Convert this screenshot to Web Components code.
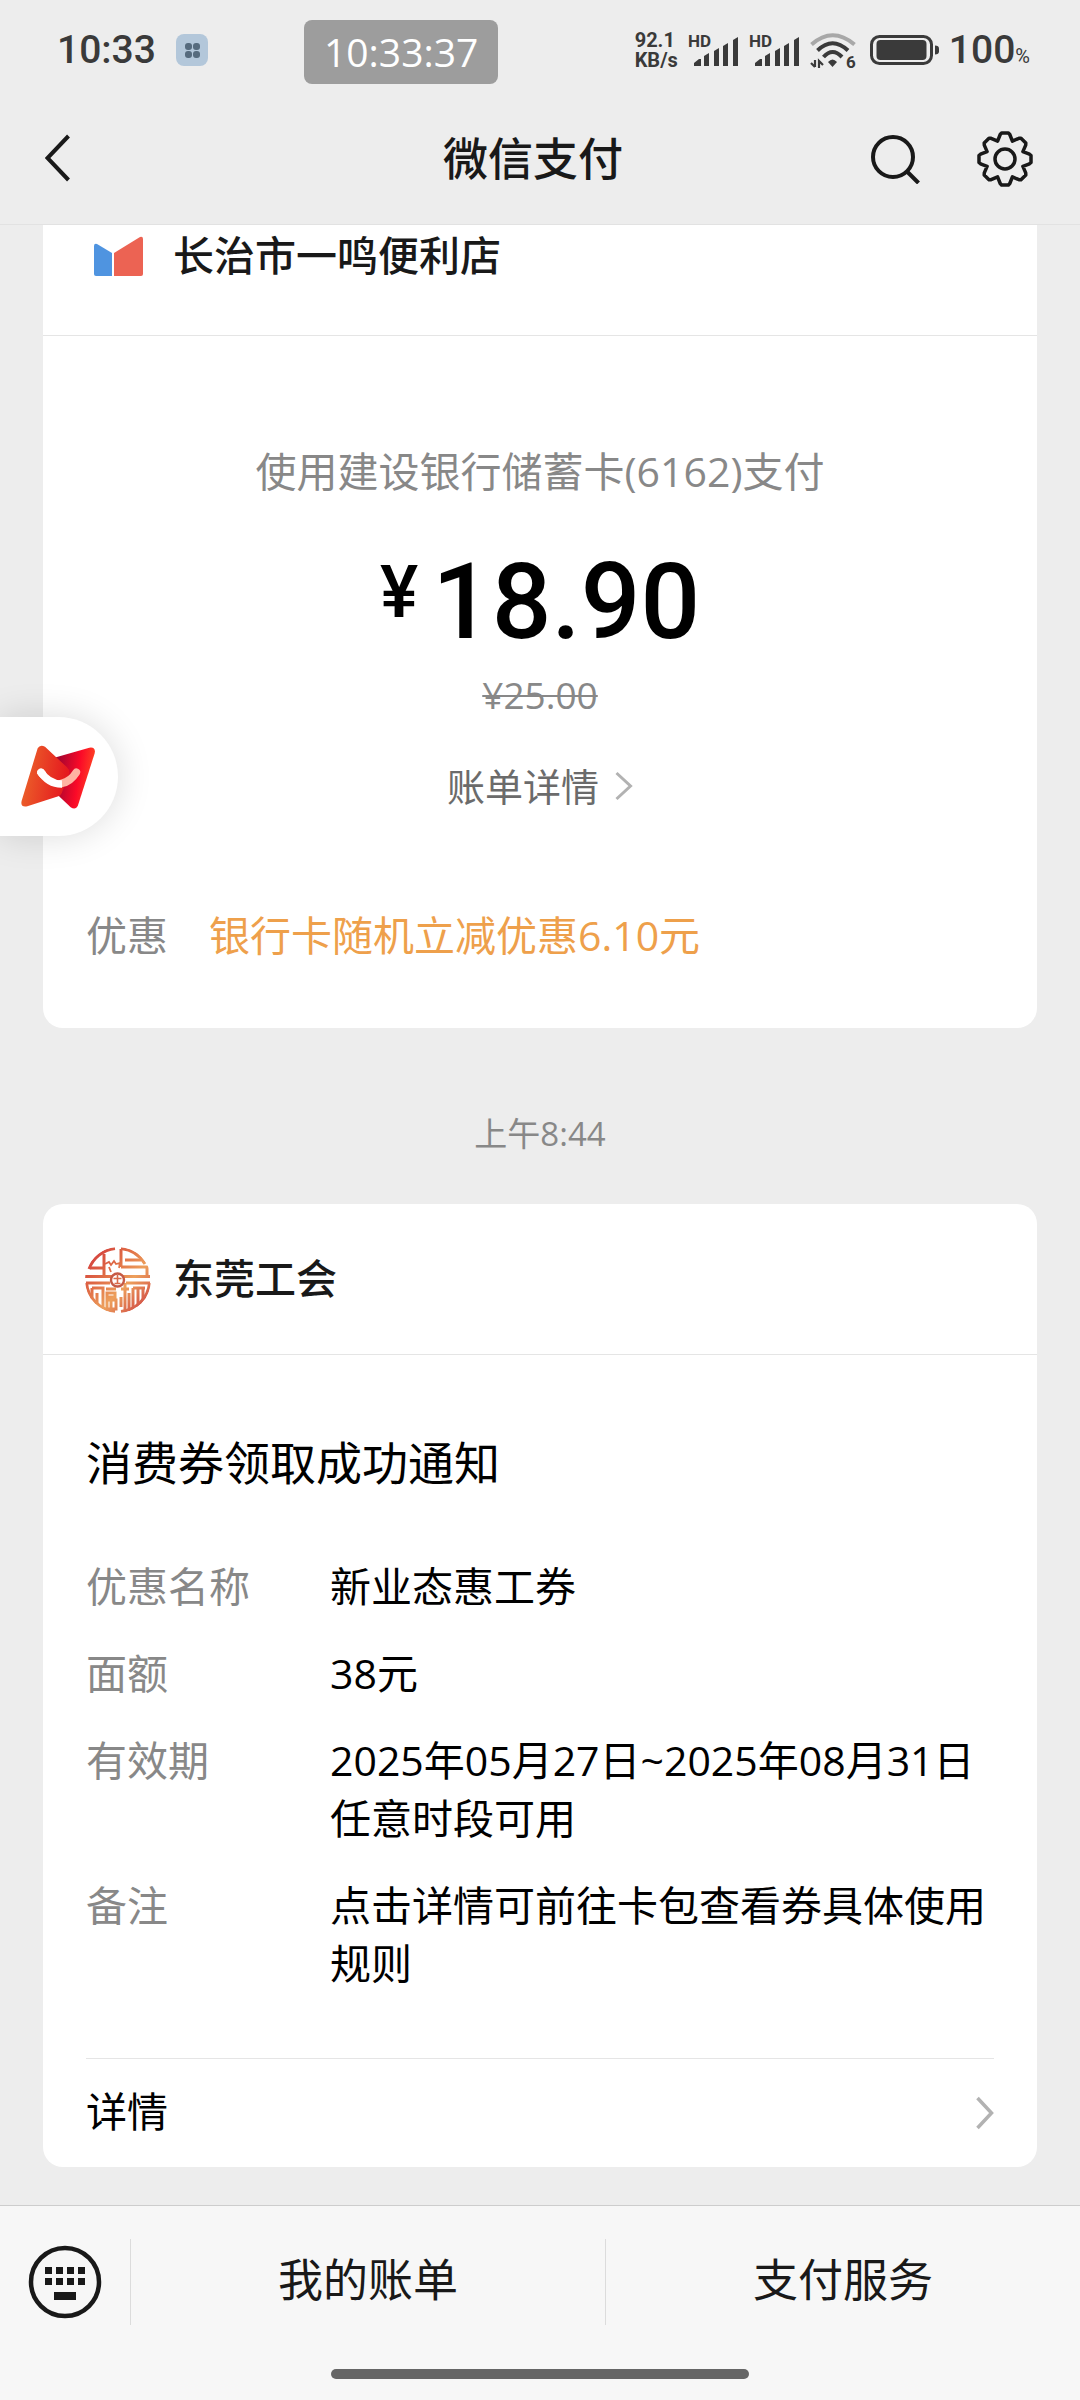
<!DOCTYPE html>
<html lang="zh-CN">
<head>
<meta charset="utf-8">
<meta name="viewport" content="width=device-width, initial-scale=1">
<title>微信支付</title>
<style>
    html, body {
        margin: 0;
        height: 100%;
    }
    body {
        --ink: #191919;
        --muted: #888;
        --line: #e5e5e5;
        --page: #ededed;
        font-family: "Open Sans", "Noto Sans CJK SC", sans-serif;
        color: #000;
        background: var(--page);
    }
</style>
</head>
<body>
<chat-page>
    <status-bar slot="top" time="10:33" clock="10:33:37" battery="100"></status-bar>
    <nav-bar slot="top">微信支付</nav-bar>

    <message-card class="pay">
        <ui-icon slot="logo" name="shop"></ui-icon>
        <span slot="name">长治市一鸣便利店</span>
        <pay-summary amount="18.90" original="¥25.00">
            <span slot="method">使用建设银行储蓄卡(6162)支付</span>
            <span slot="link">账单详情</span>
            <span slot="label">优惠</span>
            <span slot="discount">银行卡随机立减优惠6.10元</span>
        </pay-summary>
    </message-card>

    <time-stamp>上午8:44</time-stamp>

    <message-card>
        <ui-icon slot="logo" name="union"></ui-icon>
        <span slot="name">东莞工会</span>
        <coupon-notice id="notice">消费券领取成功通知</coupon-notice>
    </message-card>

    <menu-bar slot="bottom" items="我的账单,支付服务"></menu-bar>
    <float-button slot="overlay"></float-button>
</chat-page>

<script>
// eight teeth, each one the same outline turned by 45 degrees
const gearPath = () => {
    const tooth = [[-7.4, -17.9], [-4.8, -24.5], [-3.4, -26], [3.4, -26], [4.8, -24.5]];
    const pts = [];
    for (let i = 0; i < 8; i++) {
        const a = i * Math.PI / 4;
        tooth.forEach(([x, y]) => {
            const px = x * Math.cos(a) - y * Math.sin(a) + 28;
            const py = x * Math.sin(a) + y * Math.cos(a) + 28;
            pts.push(`${px.toFixed(1)} ${py.toFixed(1)}`);
        });
    }
    return `M${pts.join('L')}Z`;
};

const ICONS = {
    app: { w: 32, h: 32, body: `
        <rect width="32" height="32" rx="8" fill="#b3c7da"/>
        <g fill="#566b7e"><rect x="9" y="9" width="7" height="7" rx="3"/><rect x="17" y="9" width="7" height="7" rx="3"/>
        <rect x="9" y="17" width="7" height="7" rx="3"/><rect x="17" y="17" width="7" height="7" rx="3"/></g>` },
    signal: { w: 51, h: 48, box: '0 -8 51 48', body: `
        <text x="0" y="13" font-family="Roboto, sans-serif" font-size="17" font-weight="700" fill="#3a3a3a">HD</text>
        <g fill="#3a3a3a"><path d="M6 32v-3l5-4h2v7z"/><path d="M16 32V22l5-3v13z"/><path d="M26 32V17l5-3v18z"/>
        <path d="M35 32V12l5-3v23z"/><path d="M45 32V6l5-3v29z"/></g>` },
    wifi: { w: 50, h: 48, box: '0 -6 50 48', body: `
        <g fill="none" stroke-width="4"><path stroke="#a8a8a8" d="M1.5 12.5Q22.5-6 44.5 12.5"/>
        <path stroke="#3a3a3a" d="M7.5 18.5Q22.5 4 38 18.5"/><path stroke="#3a3a3a" d="M13.5 25Q22.5 15 32 25"/></g>
        <path fill="#3a3a3a" d="M18 30q4.5-5 9 0l-4.500 5z"/>
        <path fill="none" stroke="#3a3a3a" stroke-width="2.2" d="M5 28v7M1 31l4 4M9 36v-7l4 4"/>
        <text x="36" y="36" font-family="Roboto, sans-serif" font-size="17" font-weight="700" fill="#3a3a3a">6</text>` },
    battery: { w: 69, h: 30, body: `
        <rect x="1.5" y="1.5" width="60" height="27" rx="8" fill="none" stroke="#3a3a3a" stroke-width="3"/>
        <rect x="6.5" y="5" width="50" height="20" rx="4" fill="#3a3a3a"/>
        <path fill="#3a3a3a" d="M65 10.5q4 0 4 3v3q0 3-4 3z"/>` },
    back: { w: 26, h: 50, body: `<path d="M23.5 4L2.5 26l21 22" fill="none" stroke="#191919" stroke-width="4"/>` },
    search: { w: 50, h: 50, body: `
        <g fill="none" stroke="#191919" stroke-width="4"><circle cx="22" cy="23" r="20"/><path d="M36.5 38l11 11"/></g>` },
    gear: { w: 56, h: 56, body: `
        <g fill="none" stroke="#191919" stroke-width="3.5" stroke-linejoin="round"><path d="${gearPath()}"/><circle cx="28" cy="28" r="10"/></g>` },
    next: { w: 18, h: 34, body: `<path d="M1.5 2L15.5 17l-14 15" fill="none" stroke="#b2b2b2" stroke-width="3.5"/>` },
    nextSmall: { w: 18, h: 30, body: `<path d="M1.5 2L15.5 15l-14 13" fill="none" stroke="#b2b2b2" stroke-width="3"/>` },
    keyboard: { w: 74, h: 74, body: `
        <circle cx="37" cy="37" r="34" fill="none" stroke="#191919" stroke-width="4.5"/>
        <path fill="#191919" d="M17 22h7v7h-7zM28 22h7v7h-7zM39 22h7v7h-7zM50 22h7v7h-7zM17 33h7v7h-7zM28 33h7v7h-7zM39 33h7v7h-7zM50 33h7v7h-7zM26 47h22v8h-22z"/>` },
    shop: { w: 66, h: 66, body: `
        <path fill="#4f94e0" d="M9 22q0-3 3-2l15 9v23h-16q-2 0-2-2z"/>
        <path fill="#ec6353" d="M29 29L55 13q3-1 3 2v35q0 2-2 2H29z"/>` },
    union: { w: 66, h: 66, body: `
        <defs><linearGradient id="u" x1="0" y1="0" x2="66" y2="66" gradientUnits="userSpaceOnUse"><stop offset="0" stop-color="#cf2f3c"/><stop offset=".35" stop-color="#df6a45"/>
        <stop offset=".6" stop-color="#eda05c"/><stop offset="1" stop-color="#c93440"/></linearGradient>
        <clipPath id="c"><circle cx="33" cy="33" r="33"/></clipPath></defs>
        <g fill="none" stroke="url(#u)" stroke-width="3" clip-path="url(#c)">
            <path d="M4 22A31.5 31.5 0 0 1 30 1.5M36 1.5A31.5 31.5 0 0 1 60 17M1.5 36A31.5 31.5 0 0 0 30 64.5M36 64.5A31.5 31.5 0 0 0 64.5 36"/>
            <path d="M5 21H20M19 7V28M0 29.5H27M36 2V20M40 13H56M36 20H62V28M38 29.5H65"/>
            <path d="M1 36H25M7 41H18V46M7 41V52M12 46V57M18 46V62M21 42H31M22 46H30V50H22ZM22 53H31V62H22ZM26 53V63"/>
            <path d="M41 36H65M36 42H44M40 36V64M36 50V60M44 46V64M48 41V64M48 41H60M53 41V60M58 41V54M53 60L62 50"/>
            <path stroke-width="1.8" d="M20 17l4-2 2 3 3-4 2 3 4-1-1 5M24 20l2 5"/>
        </g>
        <circle cx="32.5" cy="33" r="6.5" fill="#fff" stroke="#c65a45" stroke-width="2.4"/>
        <path d="M28.5 31.5h8M32.5 28v9M29.5 36.5h6" stroke="#d96b4a" stroke-width="1.6"/>` },
    smile: { w: 76, h: 66, box: '62 160 228 198', body: `
        <defs><linearGradient id="l" x1="0" y1="0" x2="1" y2=".2"><stop offset="0" stop-color="#ec6a2b"/><stop offset="1" stop-color="#e5191f"/></linearGradient>
        <linearGradient id="r" x1="0" y1=".3" x2="1" y2=".5"><stop offset=".1" stop-color="#a8052f"/><stop offset=".6" stop-color="#fb0a28"/><stop offset="1" stop-color="#ff4a22"/></linearGradient></defs>
        <path fill="url(#r)" d="M165 201L270 171Q290 168 286 188L236 344Q229 360 214 350L176 314Z"/>
        <path fill="url(#l)" d="M115 173Q122 160 137 168L203 230Q213 240 209 250L187 308Q184 315 177 317L84 347Q62 351 67 330Z"/>
        <g fill="none" stroke-width="23" stroke-linecap="round"><path stroke="#ffb3a3" d="M188 278Q214 272 231 245"/>
        <path stroke="#fff" stroke-linecap="butt" d="M122 241Q148 281 188 280"/><path stroke="#fff" d="M125 245l4 5"/></g>` }
};

class UiIcon extends HTMLElement {
    connectedCallback() {
        if (this.shadowRoot) return;
        const icon = ICONS[this.getAttribute('name')];
        this.attachShadow({ mode: 'open' });
        this.shadowRoot.innerHTML = `
            <style>
                :host { display: block; flex: none; }
                svg { display: block; }
            </style>
            <svg width="${icon.w}" height="${icon.h}" viewBox="${icon.box || `0 0 ${icon.w} ${icon.h}`}" aria-hidden="true">${icon.body}</svg>
        `;
    }
}

class ChatPage extends HTMLElement {
    connectedCallback() {
        this.attachShadow({ mode: 'open' });
        // the list sticks to its end, so older messages run up under the nav bar
        this.shadowRoot.innerHTML = `
            <style>
                :host {
                    display: flex;
                    flex-direction: column;
                    height: 100vh;
                    position: relative;
                }
                main {
                    flex: 1;
                    min-height: 0;
                    overflow: hidden;
                    display: flex;
                    flex-direction: column;
                    justify-content: flex-end;
                    padding: 0 43px 38px;
                }
            </style>
            <slot name="top"></slot>
            <main><slot></slot></main>
            <slot name="bottom"></slot>
            <slot name="overlay"></slot>
        `;
    }
}

class StatusBar extends HTMLElement {
    connectedCallback() {
        this.attachShadow({ mode: 'open' });
        this.shadowRoot.innerHTML = `
            <style>
                :host {
                    display: flex;
                    align-items: center;
                    height: 100px;
                    padding: 0 50px 0 57px;
                    color: #3a3a3a;
                    position: relative;
                    z-index: 1;
                    flex: none;
                }
                .time, .level {
                    font-family: Roboto, sans-serif;
                    font-size: 39px;
                    line-height: 52px;
                    font-weight: 500;
                }
                .app { margin-left: 20px; }
                .clock {
                    position: absolute;
                    left: 304px;
                    top: 20px;
                    padding: 0 20px;
                    border-radius: 8px;
                    background: #9d9d9d;
                    color: #fff;
                    font-size: 39px;
                    line-height: 64px;
                }
                .right { margin-left: auto; display: flex; align-items: center; gap: 10px; }
                .speed { font-family: Roboto, sans-serif; font-size: 20px; line-height: 20px; font-weight: 700; }
                .speed span { display: block; }
                .level { display: flex; align-items: baseline; }
                .level small { font-size: 20px; line-height: 24px; font-weight: 400; }
            </style>
            <span class="time">${this.getAttribute('time')}</span>
            <ui-icon class="app" name="app"></ui-icon>
            <span class="clock">${this.getAttribute('clock')}</span>
            <div class="right">
                <div class="speed"><span>92.1</span><span>KB/s</span></div>
                <ui-icon name="signal"></ui-icon>
                <ui-icon name="signal"></ui-icon>
                <ui-icon name="wifi"></ui-icon>
                <ui-icon name="battery"></ui-icon>
                <span class="level">${this.getAttribute('battery')}<small>%</small></span>
            </div>
        `;
    }
}

class NavBar extends HTMLElement {
    connectedCallback() {
        this.attachShadow({ mode: 'open' });
        this.shadowRoot.innerHTML = `
            <style>
                :host {
                    display: grid;
                    grid-template-columns: 1fr auto 1fr;
                    align-items: center;
                    flex: none;
                    height: 118px;
                    padding: 0 47px 6px 45px;
                    border-bottom: 1px solid #e2e2e2;
                    color: var(--ink);
                }
                h1 { margin: 0; padding-right: 12px; font-size: 45px; line-height: 60px; font-weight: 500; }
                button { border: 0; padding: 0; background: none; }
                .tools { display: flex; justify-content: flex-end; gap: 56px; }
                .tools button { display: flex; align-items: center; }
            </style>
            <div><button aria-label="返回"><ui-icon name="back"></ui-icon></button></div>
            <h1><slot></slot></h1>
            <div class="tools">
                <button aria-label="搜索"><ui-icon name="search"></ui-icon></button>
                <button aria-label="设置"><ui-icon name="gear"></ui-icon></button>
            </div>
        `;
    }
}

class MessageCard extends HTMLElement {
    connectedCallback() {
        this.attachShadow({ mode: 'open' });
        this.shadowRoot.innerHTML = `
            <style>
                :host {
                    display: block;
                    flex: none;
                    background: #fff;
                    border-radius: 20px;
                }
                header {
                    display: flex;
                    align-items: center;
                    gap: 22px;
                    padding: 43px 42px 41px;
                    border-bottom: 1px solid var(--line);
                    color: var(--ink);
                    font-size: 41px;
                    line-height: 58px;
                    font-weight: 500;
                }
                header ::slotted(span) { padding-bottom: 4px; }
                :host(.pay) header { padding-bottom: 45px; }
            </style>
            <header><slot name="logo"></slot><slot name="name"></slot></header>
            <slot></slot>
        `;
    }
}

class PaySummary extends HTMLElement {
    connectedCallback() {
        this.attachShadow({ mode: 'open' });
        this.shadowRoot.innerHTML = `
            <style>
                :host {
                    display: flex;
                    flex-direction: column;
                    align-items: center;
                    padding: 106px 43px 64px;
                    font-size: 41px;
                    line-height: 58px;
                    color: var(--muted);
                }
                .amount {
                    display: flex;
                    align-items: flex-start;
                    gap: 14px;
                    margin-top: 43px;
                    color: #000;
                    font-family: Roboto, sans-serif;
                    font-size: 105px;
                    line-height: 120px;
                    font-weight: 500;
                }
                .amount span { font-size: 72px; line-height: 100px; }
                s { margin-top: 6px; font-size: 37px; line-height: 52px; text-decoration-thickness: 2px; }
                a {
                    display: flex;
                    align-items: center;
                    gap: 16px;
                    margin-top: 36px;
                    color: #6b6b6b;
                    font-size: 38px;
                    text-decoration: none;
                }
                .promo { align-self: stretch; display: flex; gap: 41px; margin-top: 91px; }
                .promo slot:last-child { color: #eea04b; }
            </style>
            <slot name="method"></slot>
            <div class="amount"><span>¥</span>${this.getAttribute('amount')}</div>
            <s>${this.getAttribute('original')}</s>
            <a href="#bill"><slot name="link"></slot><ui-icon name="nextSmall"></ui-icon></a>
            <div class="promo"><slot name="label"></slot><slot name="discount"></slot></div>
        `;
    }
}

class TimeStamp extends HTMLElement {
    connectedCallback() {
        this.attachShadow({ mode: 'open' });
        this.shadowRoot.innerHTML = `
            <style>
                :host {
                    display: block;
                    flex: none;
                    padding: 82px 0 46px;
                    text-align: center;
                    color: var(--muted);
                    font-size: 33px;
                    line-height: 48px;
                }
            </style>
            <slot></slot>
        `;
    }
}

class CouponNotice extends HTMLElement {
    constructor() {
        super();
        this.rows = [
            ['优惠名称', '新业态惠工券'],
            ['面额', '38元'],
            ['有效期', '2025年05月27日~2025年08月31日任意时段可用'],
            ['备注', '点击详情可前往卡包查看券具体使用规则']
        ];
    }

    connectedCallback() {
        this.attachShadow({ mode: 'open' });
        this.shadowRoot.innerHTML = `
            <style>
                :host { display: block; padding: 75px 43px 0; font-size: 41px; line-height: 58px; }
                h2 { margin: 0 0 63px; font-size: 46px; line-height: 64px; font-weight: 400; }
                dl { display: grid; grid-template-columns: 208px 1fr; gap: 29px 36px; margin: 0 0 66px; }
                dt { color: var(--muted); }
                dd { margin: 0; }
                a {
                    display: flex;
                    align-items: center;
                    justify-content: space-between;
                    height: 108px;
                    border-top: 1px solid var(--line);
                    color: inherit;
                    text-decoration: none;
                }
                a span { padding-bottom: 4px; }
            </style>
            <h2><slot></slot></h2>
            <dl>${this.rows.map(([k, v]) => `<dt>${k}</dt><dd>${v}</dd>`).join('')}</dl>
            <a href="#detail"><span>详情</span><ui-icon name="next"></ui-icon></a>
        `;
    }
}

class MenuBar extends HTMLElement {
    connectedCallback() {
        const items = this.getAttribute('items').split(',');
        this.attachShadow({ mode: 'open' });
        this.shadowRoot.innerHTML = `
            <style>
                :host {
                    display: block;
                    flex: none;
                    background: #f7f7f7;
                    border-top: 1px solid #cdcdcd;
                }
                nav { display: flex; padding: 33px 0; }
                button {
                    flex: 1;
                    height: 86px;
                    padding: 0 0 4px;
                    border: 0;
                    border-left: 1px solid #dcdcdc;
                    background: none;
                    color: var(--ink);
                    font: inherit;
                    font-size: 45px;
                    line-height: 60px;
                }
                .keys { flex: none; display: flex; align-items: center; border: 0; padding: 0 28px; }
                .home { width: 418px; height: 10px; margin: 11px auto 21px; border-radius: 5px; background: #666; }
            </style>
            <nav>
                <button class="keys" aria-label="键盘"><ui-icon name="keyboard"></ui-icon></button>
                ${items.map(text => `<button>${text}</button>`).join('')}
            </nav>
            <div class="home"></div>
        `;
    }
}

class FloatButton extends HTMLElement {
    connectedCallback() {
        this.attachShadow({ mode: 'open' });
        this.shadowRoot.innerHTML = `
            <style>
                :host { position: absolute; left: 0; top: 717px; }
                button {
                    display: flex;
                    align-items: center;
                    height: 119px;
                    padding: 0 22px 0 20px;
                    border: 0;
                    border-radius: 0 60px 60px 0;
                    background: #fff;
                    box-shadow: 0 0 36px rgba(0, 0, 0, .14);
                }
            </style>
            <button aria-label="悬浮窗"><ui-icon name="smile"></ui-icon></button>
        `;
    }
}

customElements.define('ui-icon', UiIcon);
customElements.define('chat-page', ChatPage);
customElements.define('status-bar', StatusBar);
customElements.define('nav-bar', NavBar);
customElements.define('message-card', MessageCard);
customElements.define('pay-summary', PaySummary);
customElements.define('time-stamp', TimeStamp);
customElements.define('coupon-notice', CouponNotice);
customElements.define('menu-bar', MenuBar);
customElements.define('float-button', FloatButton);
</script>
</body>
</html>
